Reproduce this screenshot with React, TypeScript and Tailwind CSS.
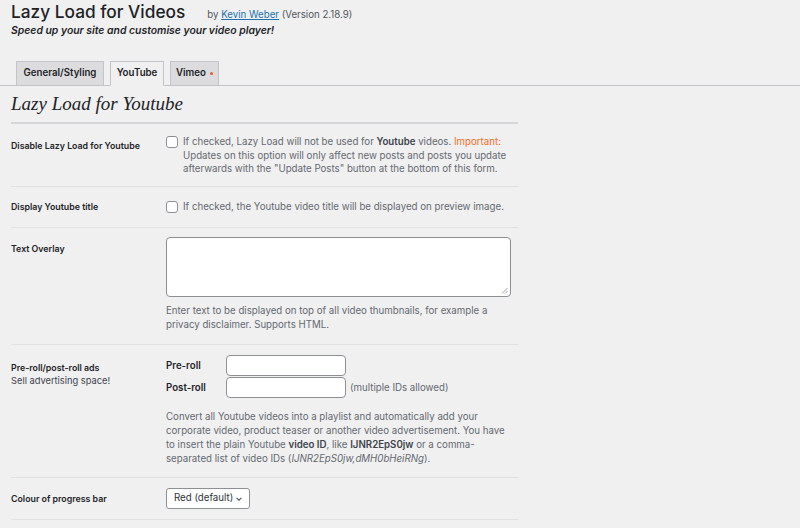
import React from "react";

const sans = "font-['Inter','Liberation_Sans',sans-serif]";

function Checkbox() {
  return <span className="mt-[1px] inline-block h-[12px] w-[12px] shrink-0 rounded-[3px] border border-[#8c8f94] bg-white" />;
}

function Row({ label, children, sub, thPad, tdPad }: { label: string; children: React.ReactNode; sub?: string; thPad: string; tdPad: string }) {
  return (
    <div className="flex border-b border-[#e2e2e4]">
      <div className={`w-[155px] shrink-0 ${thPad}`}>
        <div className="text-[8.8px] font-semibold leading-[13px] text-[#1d2327]">{label}</div>
        {sub && <div className="text-[9.3px] leading-[14px] text-[#3c434a]">{sub}</div>}
      </div>
      <div className={`flex-1 ${tdPad}`}>{children}</div>
    </div>
  );
}

export default function App() {
  return (
    <div className={`h-[528px] w-[800px] overflow-hidden bg-[#f0f0f1] ${sans} text-[#3c434a]`}>
      <div className="px-[11px]">
        <div className="flex items-baseline">
          <h1 className="text-[17.3px] font-medium leading-[24px] text-[#1d2327]">Lazy Load for Videos</h1>
          <span className="ml-[22px] text-[9.7px] text-[#50575e]">
            by <a className="text-[#2271b1] underline">Kevin Weber</a> (Version 2.18.9)
          </span>
        </div>
        <div className="text-[10.4px] font-semibold italic leading-[14px] text-[#1d2327]">Speed up your site and customise your video player!</div>
      </div>

      <div className="mt-[23px] flex items-end border-b border-[#c3c4c7] pl-[16px]">
        <div className="-mb-px mr-[6px] flex h-[25px] w-[88px] items-center justify-center border border-[#c3c4c7] bg-[#dcdcde] text-[9.7px] font-semibold text-[#1d2327]">General/Styling</div>
        <div className="-mb-px mr-[6px] flex h-[25px] w-[54px] items-center justify-center border border-[#c3c4c7] border-b-[#f0f0f1] bg-[#f0f0f1] text-[9.7px] font-semibold text-[#1d2327]">YouTube</div>
        <div className="-mb-px flex h-[25px] w-[49px] items-center justify-center border border-[#c3c4c7] bg-[#dcdcde] text-[9.7px] font-semibold text-[#1d2327]">
          Vimeo<span className="ml-[4px] inline-block h-[3px] w-[3px] rounded-full bg-[#e85b2b]" />
        </div>
      </div>

      <div className="w-[518px] pl-[11px]">
        <h2 className="pt-[6px] pb-[6px] font-['Liberation_Serif',serif] text-[19px] italic leading-[24px] text-[#1d2327]">Lazy Load for Youtube</h2>
        <div className="border-t-2 border-[#d6d6d8]">
          <Row label="Disable Lazy Load for Youtube" thPad="pt-[14.5px]" tdPad="pt-[11px] pb-[10px]">
            <div className="flex gap-[5px] text-[9.7px] leading-[13.5px] text-[#646970]">
              <Checkbox />
              <div>
                If checked, Lazy Load will not be used for <b className="font-semibold text-[#3c434a]">Youtube</b> videos.{" "}
                <span className="text-[#f56e28]">Important:</span> Updates on this option will only affect new posts and posts you update afterwards with the "Update Posts" button at the bottom of this form.
              </div>
            </div>
          </Row>
          <Row label="Display Youtube title" thPad="pt-[13.5px]" tdPad="pt-[13px] pb-[14px]">
            <div className="flex gap-[5px] text-[9.7px] leading-[13.5px] text-[#646970]">
              <Checkbox />
              <div>If checked, the Youtube video title will be displayed on preview image.</div>
            </div>
          </Row>
          <Row label="Text Overlay" thPad="pt-[13.5px]" tdPad="pt-[9px] pb-[12px]">
            <div className="pr-[6px]">
              <div className="relative h-[60px] w-[345px] rounded-[4px] border border-[#8c8f94] bg-white">
                <svg className="absolute bottom-[2px] right-[2px]" width="7" height="7" viewBox="0 0 7 7">
                  <path d="M6.5 1 L1 6.5 M6.5 4 L4 6.5" stroke="#888" strokeWidth="0.8" />
                </svg>
              </div>
              <div className="mt-[7px] text-[9.7px] leading-[14px] text-[#646970]">
                Enter text to be displayed on top of all video thumbnails, for example a privacy disclaimer. Supports HTML.
              </div>
            </div>
          </Row>
          <Row label="Pre-roll/post-roll ads" sub="Sell advertising space!" thPad="pt-[15.5px]" tdPad="pt-[10px] pb-[11px]">
            <div className="text-[9.7px] text-[#3c434a]">
              <div className="flex items-center">
                <span className="w-[60px] pt-[2px] font-semibold text-[#1d2327]">Pre-roll</span>
                <span className="h-[21px] w-[120px] rounded-[4px] border border-[#8c8f94] bg-white" />
              </div>
              <div className="mt-[1px] flex items-center">
                <span className="w-[60px] pt-[2px] font-semibold text-[#1d2327]">Post-roll</span>
                <span className="h-[21px] w-[120px] rounded-[4px] border border-[#8c8f94] bg-white" />
                <span className="ml-[4px] pt-[2px] text-[#646970]">(multiple IDs allowed)</span>
              </div>
              <div className="mt-[12px] pr-[8px] leading-[14px] text-[#646970]">
                Convert all Youtube videos into a playlist and automatically add your corporate video, product teaser or another video advertisement. You have to insert the plain Youtube <b className="font-semibold text-[#3c434a]">video ID</b>, like <b className="font-semibold text-[#3c434a]">IJNR2EpS0jw</b> or a comma-separated list of video IDs (<i>IJNR2EpS0jw,dMH0bHeiRNg</i>).
              </div>
            </div>
          </Row>
          <Row label="Colour of progress bar" thPad="pt-[13.5px]" tdPad="pt-[10px] pb-[10px]">
            <div className="flex h-[21px] w-[84px] items-center justify-between rounded-[3px] border border-[#8c8f94] bg-white pl-[7px] pr-[6px] text-[9.7px] text-[#2c3338]">
              <span>Red (default)</span>
              <svg width="8" height="8" viewBox="0 0 10 10"><path d="M2 3.5 L5 6.5 L8 3.5" fill="none" stroke="#50575e" strokeWidth="1.3" /></svg>
            </div>
          </Row>
        </div>
      </div>
    </div>
  );
}
